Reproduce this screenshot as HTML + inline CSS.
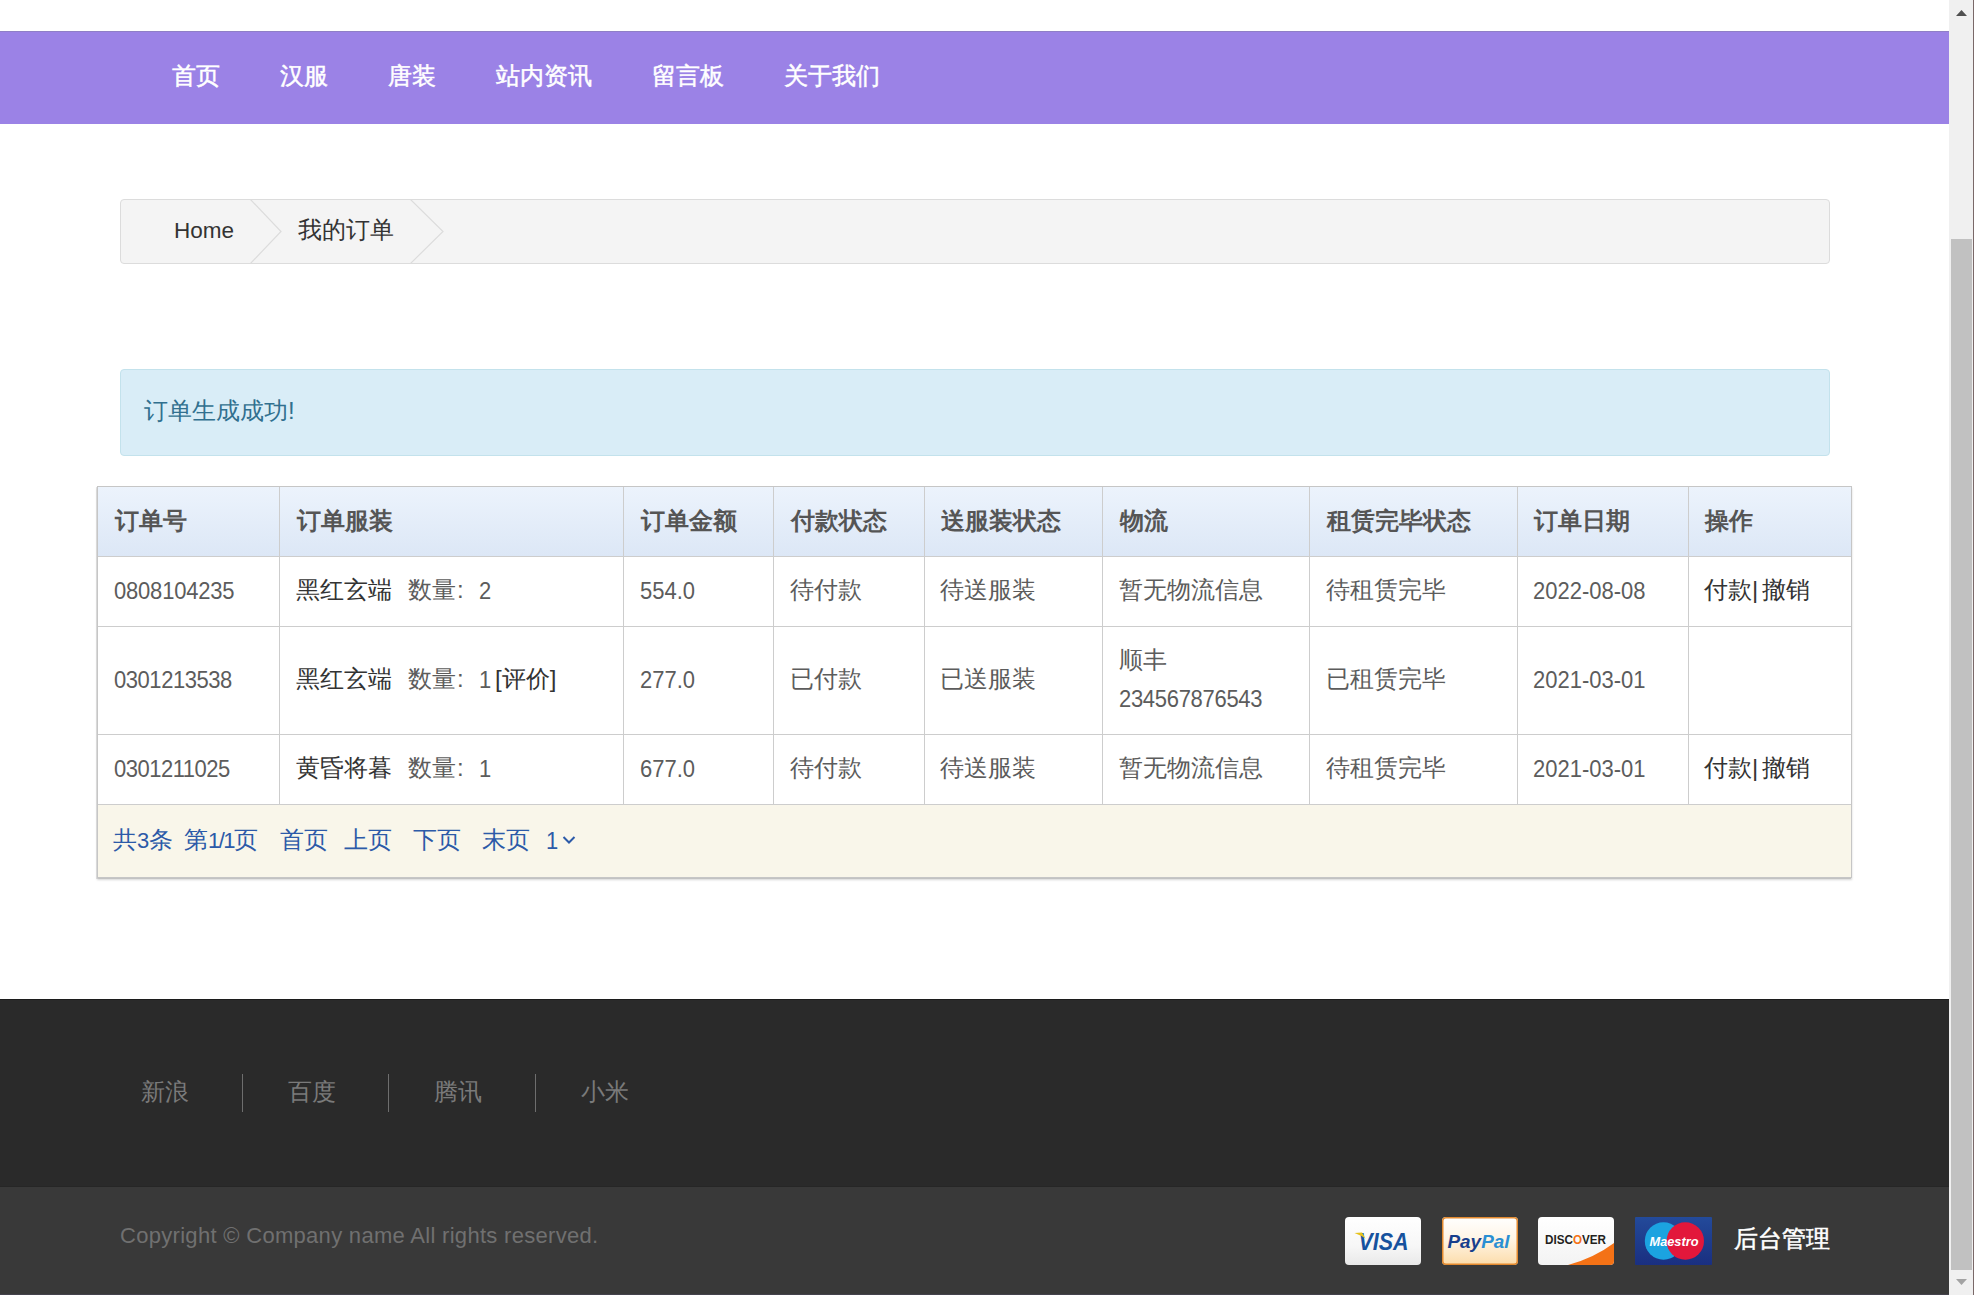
<!DOCTYPE html>
<html><head><meta charset="utf-8">
<style>
*{box-sizing:border-box;margin:0;padding:0}
html,body{width:1974px;height:1295px;overflow:hidden;background:#fff;font-family:"Liberation Sans",sans-serif}
.a{position:absolute;white-space:nowrap}
#nav{position:absolute;left:0;top:31px;width:1949px;height:93px;background:#9b82e6;box-shadow:inset 0 1px 0 #8f7fc6}
#nav .i{position:absolute;top:-2px;height:93px;line-height:93px;font-size:24px;color:#fff;-webkit-text-stroke:.5px #fff}
#bc{position:absolute;left:120px;top:199px;width:1710px;height:65px;background:#f4f4f4;border:1px solid #dcdcdc;border-radius:4px;overflow:hidden}
#alert{position:absolute;left:120px;top:369px;width:1710px;height:87px;background:#d9edf7;border:1px solid #c3e2ec;border-radius:4px}
#tbl{position:absolute;left:97px;top:486px;width:1755px;height:392px;border:1px solid #c6c6c6;box-shadow:-1px 1px 0 rgba(0,0,0,.10),0 2px 2px rgba(0,0,0,.16);background:#fff}
.hd{position:absolute;left:0;top:0;width:1753px;height:70px;background:linear-gradient(#ecf3fc,#dce7f6)}
.vl{position:absolute;top:0;width:1px;height:317px;background:#cdcdcd}
.hl{position:absolute;left:0;width:1753px;height:1px;background:#cdcdcd}
.pg{position:absolute;left:0;top:318px;width:1753px;height:72px;background:#f9f6ea}
.th{position:absolute;font-size:24px;font-weight:bold;color:#555;line-height:70px;top:-1px}
.td{position:absolute;font-size:24px;color:#555}
.t.ln,.ln{color:#2c5aa8}
.t{position:absolute;white-space:nowrap;font-size:24px;line-height:28px;color:#5c5c5c}
.n{font-size:22px}
div.n{transform:scaleY(1.1);transform-origin:50% 0}
.d{color:#333}
#f1{position:absolute;left:0;top:999px;width:1949px;height:188px;background:#2a2a2a;box-shadow:inset 0 1px 0 #1c1c1c,inset 0 -1px 0 #262626}
#f2{position:absolute;left:0;top:1187px;width:1949px;height:108px;background:#393939}
.ft{position:absolute;top:79px;font-size:24px;line-height:28px;color:#7a7a7a;white-space:nowrap}
.fs{position:absolute;top:75px;width:1px;height:38px;background:#6e6e6e}
.card{position:absolute;top:30px;width:76px;height:48px;border-radius:4px;overflow:hidden}
#sb{position:absolute;left:1949px;top:0;width:25px;height:1295px;background:#f0f0f0}
</style></head><body>

<div id="nav">
<div class="i" style="left:172px">首页</div>
<div class="i" style="left:280px">汉服</div>
<div class="i" style="left:388px">唐装</div>
<div class="i" style="left:496px">站内资讯</div>
<div class="i" style="left:652px">留言板</div>
<div class="i" style="left:784px">关于我们</div>
</div>

<div id="bc">
<div class="a" style="left:53px;top:-1px;line-height:63px;font-size:22.5px;color:#333">Home</div>
<div class="a" style="left:177px;top:-2px;line-height:63px;font-size:24px;color:#333">我的订单</div>
<svg style="position:absolute;left:0;top:0" width="1708" height="63"><polyline points="129,-1 160,31.5 129,64" fill="none" stroke="#dcdcdc" stroke-width="1.2"/><polyline points="289,-1 322,31.5 289,64" fill="none" stroke="#dcdcdc" stroke-width="1.2"/></svg>
</div>

<div id="alert">
<div class="a" style="left:23px;top:-2px;line-height:85px;font-size:24px;color:#31708f">订单生成成功!</div>
</div>

<div id="tbl">
<div class="hd"></div>
<div class="hl" style="top:69px"></div>
<div class="hl" style="top:139px"></div>
<div class="hl" style="top:247px"></div>
<div class="hl" style="top:317px"></div>
<div class="pg"></div>
<div class="vl" style="left:181px"></div>
<div class="vl" style="left:525px"></div>
<div class="vl" style="left:675px"></div>
<div class="vl" style="left:826px"></div>
<div class="vl" style="left:1004px"></div>
<div class="vl" style="left:1211px"></div>
<div class="vl" style="left:1419px"></div>
<div class="vl" style="left:1590px"></div>

<div class="th" style="left:17px">订单号</div>
<div class="th" style="left:199px">订单服装</div>
<div class="th" style="left:543px">订单金额</div>
<div class="th" style="left:693px">付款状态</div>
<div class="th" style="left:843px">送服装状态</div>
<div class="th" style="left:1022px">物流</div>
<div class="th" style="left:1229px">租赁完毕状态</div>
<div class="th" style="left:1436px">订单日期</div>
<div class="th" style="left:1607px">操作</div>

</div>


<div id="body">
<!-- row1 -->
<div class="t n" style="left:114px;top:576px;letter-spacing:-.2px">0808104235</div>
<div class="t d" style="left:296px;top:576px">黑红玄端</div>
<div class="t" style="left:408px;top:576px">数量</div><div class="t" style="left:457px;top:576px">:</div><div class="t n" style="left:479px;top:576px">2</div>
<div class="t n" style="left:640px;top:576px">554.0</div>
<div class="t" style="left:790px;top:576px">待付款</div>
<div class="t" style="left:940px;top:576px">待送服装</div>
<div class="t" style="left:1119px;top:576px">暂无物流信息</div>
<div class="t" style="left:1326px;top:576px">待租赁完毕</div>
<div class="t n" style="left:1533px;top:576px">2022-08-08</div>
<div class="t d" style="left:1704px;top:576px">付款|</div><div class="t d" style="left:1762px;top:576px">撤销</div>
<!-- row2 -->
<div class="t n" style="left:114px;top:665px;letter-spacing:-.45px">0301213538</div>
<div class="t d" style="left:296px;top:665px">黑红玄端</div>
<div class="t" style="left:408px;top:665px">数量</div><div class="t" style="left:457px;top:665px">:</div><div class="t n" style="left:479px;top:665px">1</div>
<div class="t d" style="left:495px;top:665px">[评价]</div>
<div class="t n" style="left:640px;top:665px">277.0</div>
<div class="t" style="left:790px;top:665px">已付款</div>
<div class="t" style="left:940px;top:665px">已送服装</div>
<div class="t" style="left:1119px;top:646px">顺丰</div>
<div class="t n" style="left:1119px;top:684px;letter-spacing:-.3px">234567876543</div>
<div class="t" style="left:1326px;top:665px">已租赁完毕</div>
<div class="t n" style="left:1533px;top:665px">2021-03-01</div>
<!-- row3 -->
<div class="t n" style="left:114px;top:754px;letter-spacing:-.5px">0301211025</div>
<div class="t d" style="left:296px;top:754px">黄昏将暮</div>
<div class="t" style="left:408px;top:754px">数量</div><div class="t" style="left:457px;top:754px">:</div><div class="t n" style="left:479px;top:754px">1</div>
<div class="t n" style="left:640px;top:754px">677.0</div>
<div class="t" style="left:790px;top:754px">待付款</div>
<div class="t" style="left:940px;top:754px">待送服装</div>
<div class="t" style="left:1119px;top:754px">暂无物流信息</div>
<div class="t" style="left:1326px;top:754px">待租赁完毕</div>
<div class="t n" style="left:1533px;top:754px">2021-03-01</div>
<div class="t d" style="left:1704px;top:754px">付款|</div><div class="t d" style="left:1762px;top:754px">撤销</div>
<!-- pagination -->
<div class="t ln" style="left:113px;top:826px">共<span class="n">3</span>条</div><div class="t ln" style="left:184px;top:826px">第<span class="n" style="letter-spacing:-1.5px">1/1</span>页</div>
<div class="t ln" style="left:280px;top:826px">首页</div>
<div class="t ln" style="left:344px;top:826px">上页</div>
<div class="t ln" style="left:413px;top:826px">下页</div>
<div class="t ln" style="left:482px;top:826px">末页</div>
<div class="t ln n" style="left:546px;top:826px">1</div>
<svg style="position:absolute;left:562px;top:835px" width="14" height="10"><polyline points="1.5,2 7,7.5 12.5,2" fill="none" stroke="#2c5aa8" stroke-width="2"/></svg>
</div>

<div id="f1">
<div class="ft" style="left:141px">新浪</div>
<div class="fs" style="left:242px"></div>
<div class="ft" style="left:288px">百度</div>
<div class="fs" style="left:388px"></div>
<div class="ft" style="left:434px">腾讯</div>
<div class="fs" style="left:535px"></div>
<div class="ft" style="left:581px">小米</div>
</div>
<div id="f2">
<div class="a" style="left:120px;top:36px;font-size:22px;line-height:26px;color:#707070;letter-spacing:.3px">Copyright © Company name All rights reserved.</div>
<div class="card" style="left:1345px;background:linear-gradient(#fff 0%,#f7f7f7 60%,#e9e9e9 100%)">
<svg width="76" height="48" viewBox="0 0 76 48"><text x="13.5" y="32.6" font-family="Liberation Sans" font-weight="bold" font-style="italic" font-size="23" fill="#16529e" textLength="50" lengthAdjust="spacingAndGlyphs">VISA</text><polygon points="9.5,16 17,15.6 20.5,21.5 16.5,19" fill="#e6c21a"/></svg>
</div>
<div class="card" style="left:1442px;background:linear-gradient(#fff 0%,#fff5e6 45%,#fcdcaa 100%);box-shadow:inset 0 0 0 1.5px #e3892e">
<svg width="76" height="48" viewBox="0 0 76 48"><text x="5.5" y="30.5" font-family="Liberation Sans" font-weight="bold" font-style="italic" font-size="19" fill="#183f8c" textLength="62" lengthAdjust="spacingAndGlyphs">Pay<tspan fill="#2a8fd3">Pal</tspan></text></svg>
</div>
<div class="card" style="left:1538px;background:linear-gradient(#fff,#f3f3f3)">
<svg width="76" height="48" viewBox="0 0 76 48"><path d="M30 48 Q56 41 76 26 L76 48 Z" fill="#f47216"/><text x="7" y="26.6" font-family="Liberation Sans" font-weight="bold" font-size="13.5" fill="#231f20" textLength="61" lengthAdjust="spacingAndGlyphs">DISC<tspan fill="#f47216">O</tspan>VER</text></svg>
</div>
<div class="card" style="left:1635px;background:linear-gradient(#234a9a,#1a2f80);border-radius:1px;width:77px">
<svg width="77" height="48" viewBox="0 0 77 48"><circle cx="28.5" cy="24" r="18.7" fill="#1ba3e0"/><circle cx="50.3" cy="24" r="18.7" fill="#e2173b"/><text x="14.5" y="29" font-family="Liberation Sans" font-weight="bold" font-style="italic" font-size="13.5" fill="#fff" textLength="49" lengthAdjust="spacingAndGlyphs">Maestro</text></svg>
</div>
<div class="a" style="left:1734px;top:38px;font-size:24px;line-height:28px;color:#fff;-webkit-text-stroke:.5px #fff">后台管理</div>
</div>
<div id="sb">
<svg style="position:absolute;left:0;top:0" width="25" height="1295">
<polygon points="7,16 18,16 12.5,10" fill="#505050"/>
<rect x="2" y="239" width="21" height="1031" fill="#c1c1c1"/>
<polygon points="7,1279 18,1279 12.5,1285" fill="#a3a3a3"/>
<rect x="24" y="0" width="1" height="1295" fill="#7a6868"/>
</svg>
</div>
<div style="position:absolute;left:0;top:1294px;width:1949px;height:1px;background:#44424c"></div>
</body></html>
